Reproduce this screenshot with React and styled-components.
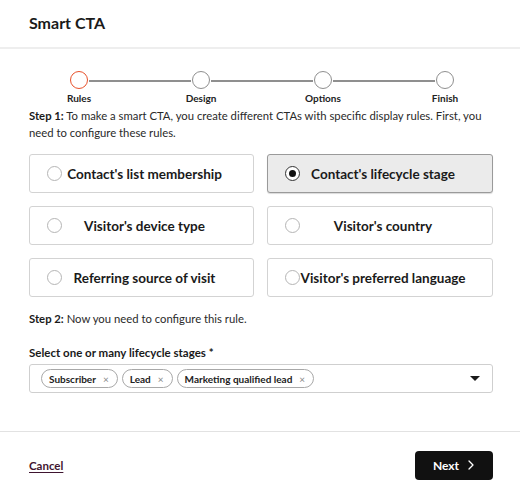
import React from 'react'
import styled, { createGlobalStyle } from 'styled-components'

const GlobalStyle = createGlobalStyle`
  html, body {
    margin: 0;
    padding: 0;
    background: #fff;
  }
  body {
    font-family: Lato, "Noto Sans", sans-serif;
    color: #1f1f1f;
  }
`

const Modal = styled.div`
  width: 520px;
  height: 498px;
  display: flex;
  flex-direction: column;
  background: #fff;
`

const Header = styled.div`
  height: 47px;
  display: flex;
  align-items: center;
  padding: 0 29px;
  border-bottom: 2px solid #eeeeee;
  box-sizing: content-box;
`

const Title = styled.h1`
  margin: 0;
  margin-top: -3px;
  font-size: 16px;
  font-weight: 700;
  color: #1a1a1a;
`

const Body = styled.div`
  flex: 1;
  padding: 0 27px 0 29px;
`

const Stepper = styled.div`
  display: flex;
  width: 488px;
  margin: 22px 0 3px -11px;
`

const Step = styled.div`
  flex: 1;
  position: relative;
  display: flex;
  flex-direction: column;
  align-items: center;
  &:not(:last-child)::after {
    content: '';
    position: absolute;
    top: 9px;
    left: calc(50% + 10px);
    width: calc(100% - 20px);
    height: 2px;
    background: #8f8f8f;
  }
`

const Dot = styled.div`
  width: 16px;
  height: 16px;
  border-radius: 50%;
  border: 1.5px solid ${p => (p.$active ? '#e8512b' : '#8f8f8f')};
  background: #fff;
`

const StepLabel = styled.div`
  margin-top: 3px;
  font-size: 10px;
  line-height: 12px;
  font-weight: 700;
  color: #222;
`

const Paragraph = styled.p`
  margin: ${p => p.$margin || '0'};
  font-size: 11.3px;
  line-height: 17px;
  color: #2a2a2a;
`

const Strong = styled.strong`
  font-weight: 700;
  color: #1a1a1a;
`

const Options = styled.div`
  display: grid;
  grid-template-columns: 225px 226px;
  column-gap: 13px;
  row-gap: 13px;
  margin-top: 13px;
`

const Card = styled.div`
  height: 39px;
  box-sizing: border-box;
  display: grid;
  align-items: center;
  padding: 0 17px;
  border-radius: 3px;
  border: 1px solid ${p => (p.$selected ? '#9a9a9a' : '#d3d3d3')};
  background: ${p => (p.$selected ? '#ebebeb' : '#fff')};
  box-shadow: ${p => (p.$selected ? '0 1px 1px rgba(0,0,0,0.15)' : 'none')};
`

const Radio = styled.span`
  grid-area: 1 / 1;
  justify-self: start;
  width: 15px;
  height: 15px;
  box-sizing: border-box;
  border-radius: 50%;
  border: 1px solid ${p => (p.$checked ? '#333' : '#b5b5b5')};
  background: #fff;
  display: flex;
  align-items: center;
  justify-content: center;
  &::after {
    content: '';
    width: 7px;
    height: 7px;
    border-radius: 50%;
    background: ${p => (p.$checked ? '#111' : 'transparent')};
  }
`

const OptionLabel = styled.span`
  grid-area: 1 / 1;
  justify-self: center;
  padding-left: 6px;
  font-size: 13.5px;
  font-weight: 700;
  color: #1a1a1a;
  white-space: nowrap;
`

const FieldLabel = styled.div`
  margin-top: 19px;
  font-size: 11.5px;
  font-weight: 700;
  color: #1a1a1a;
`

const Select = styled.div`
  margin-top: 5px;
  height: 29px;
  box-sizing: border-box;
  border: 1px solid #cfcfcf;
  border-radius: 3px;
  display: flex;
  align-items: center;
  padding: 0 11px 0 11px;
  gap: 4px;
`

const Chip = styled.span`
  height: 19px;
  box-sizing: border-box;
  display: inline-flex;
  align-items: center;
  gap: 7px;
  padding: 0 8px 0 7px;
  border: 1px solid #a8a8a8;
  border-radius: 10px;
  font-size: 10px;
  font-weight: 700;
  color: #222;
`

const ChipX = styled.span`
  font-size: 10px;
  font-weight: 400;
  color: #888;
`

const Caret = styled.span`
  margin-left: auto;
  width: 0;
  height: 0;
  border-left: 5px solid transparent;
  border-right: 5px solid transparent;
  border-top: 5px solid #1a1a1a;
  margin-right: 1px;
`

const Footer = styled.div`
  height: 66px;
  border-top: 1px solid #e2e2e2;
  display: flex;
  align-items: center;
  justify-content: space-between;
  padding: 0 27px 0 29px;
`

const CancelLink = styled.a`
  font-size: 11.5px;
  font-weight: 700;
  color: #3f1530;
  text-decoration: underline;
  text-underline-offset: 2px;
  cursor: pointer;
`

const NextButton = styled.button`
  width: 78px;
  height: 29px;
  border: none;
  border-radius: 4px;
  background: #111;
  color: #fff;
  font-family: inherit;
  font-size: 12px;
  font-weight: 700;
  display: flex;
  align-items: center;
  justify-content: center;
  gap: 8px;
  cursor: pointer;
`

const steps = ['Rules', 'Design', 'Options', 'Finish']
const options = [
  { label: "Contact's list membership" },
  { label: "Contact's lifecycle stage", selected: true },
  { label: "Visitor's device type" },
  { label: "Visitor's country" },
  { label: 'Referring source of visit' },
  { label: "Visitor's preferred language" },
]
const chips = ['Subscriber', 'Lead', 'Marketing qualified lead']

const App = () => {
  return (
    <Modal>
      <GlobalStyle />
      <Header>
        <Title>Smart CTA</Title>
      </Header>
      <Body>
        <Stepper>
          {steps.map((s, i) => (
            <Step key={s}>
              <Dot $active={i === 0} />
              <StepLabel>{s}</StepLabel>
            </Step>
          ))}
        </Stepper>
        <Paragraph>
          <Strong>Step 1:</Strong> To make a smart CTA, you create different CTAs with specific display rules. First, you
          need to configure these rules.
        </Paragraph>
        <Options>
          {options.map(o => (
            <Card key={o.label} $selected={o.selected}>
              <Radio $checked={o.selected} />
              <OptionLabel>{o.label}</OptionLabel>
            </Card>
          ))}
        </Options>
        <Paragraph $margin="13px 0 0">
          <Strong>Step 2:</Strong> Now you need to configure this rule.
        </Paragraph>
        <FieldLabel>Select one or many lifecycle stages *</FieldLabel>
        <Select>
          {chips.map(c => (
            <Chip key={c}>
              {c}
              <ChipX>×</ChipX>
            </Chip>
          ))}
          <Caret />
        </Select>
      </Body>
      <Footer>
        <CancelLink>Cancel</CancelLink>
        <NextButton>
          Next
          <svg width="8" height="10" viewBox="0 0 8 10" fill="none">
            <path d="M2 1l4 4-4 4" stroke="#fff" strokeWidth="1.3" strokeLinecap="round" strokeLinejoin="round" />
          </svg>
        </NextButton>
      </Footer>
    </Modal>
  )
}

export default App
